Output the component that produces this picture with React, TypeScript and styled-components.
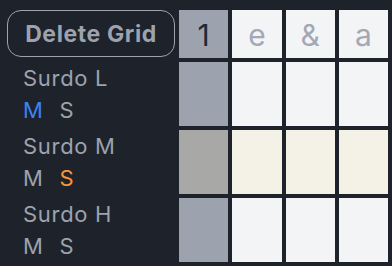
import React from "react";
import styled, { createGlobalStyle } from "styled-components";

const Global = createGlobalStyle`
  html, body { margin: 0; padding: 0; background: #1e222a; }
  body { font-family: Inter, "Noto Sans", sans-serif; }
`;

const Page = styled.div`
  width: 392px;
  height: 266px;
  box-sizing: border-box;
  padding: 10px 4px 4px 7px;
  background: #1e222a;
  display: grid;
  grid-template-columns: 168px repeat(4, 1fr);
  grid-template-rows: 48px repeat(3, 64px);
  gap: 4px;
`;

const DeleteButton = styled.button`
  box-sizing: border-box;
  width: 168px;
  height: 47px;
  border: 1.5px solid #9ca3af;
  border-radius: 14px;
  background: transparent;
  color: #9ca3af;
  font-family: Inter, "Noto Sans", sans-serif;
  font-weight: 700;
  font-size: 23px;
  letter-spacing: 0.6px;
  padding: 0;
  display: flex;
  align-items: center;
  justify-content: center;
`;

const Label = styled.div`
  padding-left: 16px;
  display: flex;
  flex-direction: column;
  color: #9ca3af;
  font-size: 22px;
  letter-spacing: 0.7px;
  line-height: 32px;
`;

const Toggles = styled.div`
  display: flex;
  gap: 16px;
`;

const Toggle = styled.span<{ $color?: string }>`
  color: ${(p) => p.$color ?? "#9ca3af"};
`;

const Cell = styled.div<{ $bg: string; $fg?: string }>`
  background: ${(p) => p.$bg};
  color: ${(p) => p.$fg ?? "#9ca3af"};
  font-size: 30px;
  display: flex;
  align-items: center;
  justify-content: center;
  padding-top: 2px;
  box-sizing: border-box;
`;

const beats = ["1", "e", "&", "a"];

const tracks = [
  { name: "Surdo L", m: "#3b82f6", s: undefined, first: "#9ca3af", rest: "#f3f4f6" },
  { name: "Surdo M", m: undefined, s: "#fb923c", first: "#a8a9a6", rest: "#f4f1e6" },
  { name: "Surdo H", m: undefined, s: undefined, first: "#9ca3af", rest: "#f3f4f6" },
];

export default function App() {
  return (
    <>
      <Global />
      <Page>
        <DeleteButton>Delete Grid</DeleteButton>
        {beats.map((b, i) => (
          <Cell key={b} $bg={i === 0 ? "#9ca3af" : "#f3f4f6"} $fg={i === 0 ? "#1f2937" : "#a3a8b4"}>
            {b}
          </Cell>
        ))}
        {tracks.map((t) => (
          <React.Fragment key={t.name}>
            <Label>
              <span>{t.name}</span>
              <Toggles>
                <Toggle $color={t.m}>M</Toggle>
                <Toggle $color={t.s}>S</Toggle>
              </Toggles>
            </Label>
            {beats.map((b, i) => (
              <Cell key={b} $bg={i === 0 ? t.first : t.rest} />
            ))}
          </React.Fragment>
        ))}
      </Page>
    </>
  );
}
